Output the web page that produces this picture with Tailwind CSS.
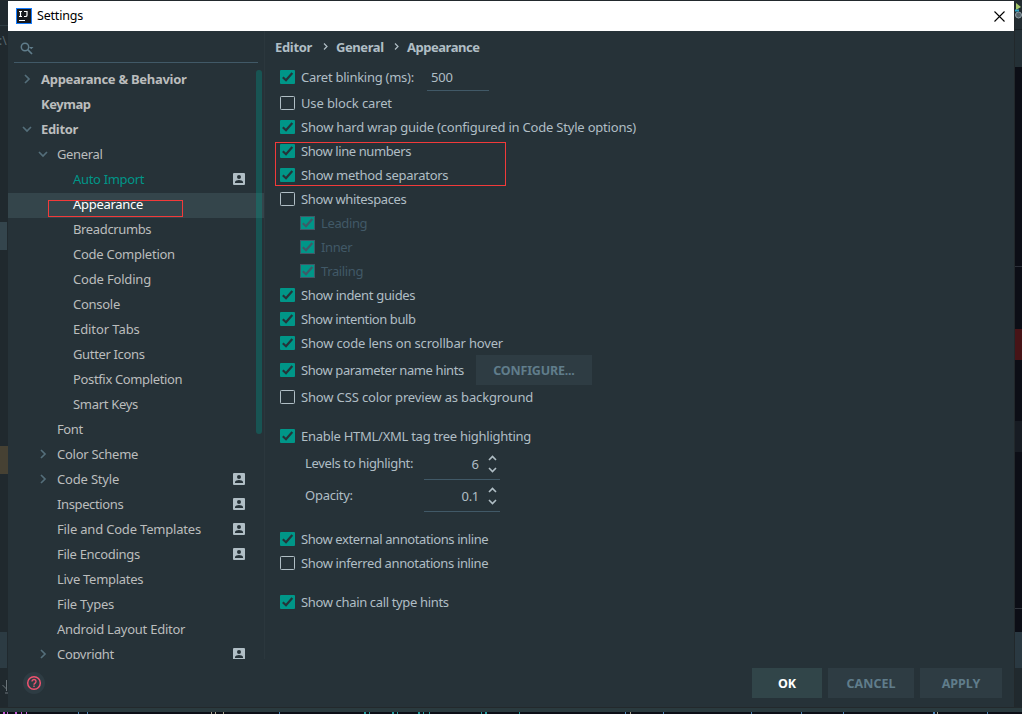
<!DOCTYPE html>
<html lang="en">
<head>
<meta charset="utf-8">
<title>Settings</title>
<script src="https://cdn.jsdelivr.net/npm/@tailwindcss/browser@4"></script>
</head>
<body class="w-[1022px] h-[714px] overflow-hidden flex flex-col bg-[#20292e] font-['Noto_Sans',sans-serif] text-[13px] leading-[18px] text-[#b0bec5] whitespace-nowrap">
<svg class="hidden">
  <symbol id="on" viewBox="0 0 15 14"><rect width="15" height="14" rx="1" fill="#009688"/><path d="M2.8 7.2 6 10.2 12.3 3" fill="none" stroke="#263238" stroke-width="2.200"/></symbol>
  <symbol id="dis" viewBox="0 0 15 14"><rect x=".5" y=".5" width="14" height="13" fill="#009688" stroke="#415967"/><path d="M2.8 7.2 6 10.2 12.3 3" fill="none" stroke="#415967" stroke-width="2.200"/></symbol>
  <symbol id="off" viewBox="0 0 15 14"><rect x=".5" y=".5" width="14" height="13" rx=".8" fill="none" stroke="#b0bec5"/></symbol>
  <symbol id="right" viewBox="0 0 10 10"><path d="M3 1l4 4-4 4" fill="none" stroke="#546e7a" stroke-width="1.700"/></symbol>
  <symbol id="down" viewBox="0 0 10 10"><path d="M1 3l4 4 4-4" fill="none" stroke="#546e7a" stroke-width="1.700"/></symbol>
  <symbol id="person" viewBox="0 0 12 12"><rect width="12" height="12" rx="1" fill="#b0bec5"/><circle cx="6" cy="4" r="2" fill="#263238"/><path d="M2 10V9c0-1.3 2.3-2 4-2s4 .7 4 2v1z" fill="#263238"/></symbol>
  <symbol id="spin" viewBox="0 0 9 18"><path d="M1 5l3.500-3.500L8 5M1 13l3.500 3.500L8 13" fill="none" stroke="#b0bec5" stroke-width="1.600"/></symbol>
</svg>
<div class="h-px shrink-0 bg-[#22292d]"></div>
<div class="flex h-[706px] shrink-0">
  <div class="w-2 flex flex-col overflow-hidden bg-[#20292e]">
    <div class="h-6"></div><div class="h-px bg-[#2f3c42]"></div>
    <div class="h-[30px] text-[12px] leading-[30px] text-[#596870] -ml-px">:\</div>
    <div class="h-[166px]"></div><div class="h-7 w-[7px] bg-[#34454d]"></div>
    <div class="h-[196px]"></div><div class="h-7 bg-[#464133]"></div>
    <div class="h-[158px]"></div><div class="h-9 w-[7px] bg-[#2c3b43]"></div>
    <div class="h-3"></div>
    <svg class="w-2 h-[14px] shrink-0" viewBox="0 0 8 14"><path d="M6.500 0v11M2.500 5l4 4M5 13h3" fill="none" stroke="#6b757a"/></svg>
  </div>
  <div class="w-[1006px] flex flex-col bg-[#263238]">
    <header class="h-[30px] shrink-0 bg-white text-black flex items-center pl-2 pr-[9px]">
      <svg class="size-4" viewBox="0 0 16 16"><rect width="16" height="16" fill="#167dff"/><rect x="1" y="1" width="14" height="14" fill="#16181d"/><path d="M3 3.500h3M4.500 3.500v5M3 8.500h3M8 3.500h3v3.700q0 1.300-1.500 1.300H8" fill="none" stroke="#fff" stroke-width="1.200"/><path d="M3 12.500h6" stroke="#fff"/></svg>
      <span class="ml-[5px] text-[12.500px] tracking-[-0.2px]">Settings</span>
      <svg class="ml-auto size-[11px]" viewBox="0 0 11 11"><path d="M.5.5l10 10M10.500.5l-10 10" stroke="#000" stroke-width="1.100"/></svg>
    </header>
    <div class="flex h-[628px] shrink-0">
      <aside class="w-[257px] shrink-0 h-full flex flex-col border-r border-[#2b373d] text-[#bbbdbd] relative">
        <div class="h-[32px] shrink-0 ml-[6px] mr-[6px] border-b border-[#415967] flex items-center pl-[6px] pt-1">
          <svg class="w-[15px] h-[13px]" viewBox="0 0 15 13"><circle cx="5" cy="5" r="3.700" fill="none" stroke="#607d8b" stroke-width="1.500"/><path d="M7.700 7.700l4.300 4.300" stroke="#607d8b" stroke-width="1.700"/><path d="M9 5h4.500l-2.250 2.250z" fill="#607d8b"/></svg>
        </div>
        <nav class="mt-[5px] flex-1 overflow-hidden">
          <div class="h-[25px] flex items-center pb-1 pl-[14px] font-bold tracking-[-0.29px]"><svg class="size-[10px] mr-[9px]"><use href="#right"/></svg>Appearance &amp; Behavior</div>
          <div class="h-[25px] flex items-center pb-1 pl-[33px] font-bold tracking-[-0.45px]">Keymap</div>
          <div class="h-[25px] flex items-center pb-1 pl-[14px] font-bold tracking-[-0.33px]"><svg class="size-[10px] mr-[9px]"><use href="#down"/></svg>Editor</div>
          <div class="h-[25px] flex items-center pb-1 pl-[30px] tracking-[-0.35px]"><svg class="size-[10px] mr-[9px]"><use href="#down"/></svg>General</div>
          <div class="h-[25px] flex items-center pb-1 pl-[65px] pr-[19px] justify-between text-[#009688] tracking-[-0.32px]">Auto Import<svg class="size-3"><use href="#person"/></svg></div>
          <div class="h-[25px] flex items-center pb-[3px] pl-[65px] bg-[#34454b] text-white tracking-[-0.3px]">Appearance</div>
          <div class="h-[25px] flex items-center pb-1 pl-[65px] tracking-[-0.36px]">Breadcrumbs</div>
          <div class="h-[25px] flex items-center pb-1 pl-[65px] tracking-[-0.25px]">Code Completion</div>
          <div class="h-[25px] flex items-center pb-1 pl-[65px] tracking-[-0.18px]">Code Folding</div>
          <div class="h-[25px] flex items-center pb-1 pl-[65px] tracking-[-0.28px]">Console</div>
          <div class="h-[25px] flex items-center pb-1 pl-[65px] tracking-[-0.08px]">Editor Tabs</div>
          <div class="h-[25px] flex items-center pb-1 pl-[65px] tracking-[-0.35px]">Gutter Icons</div>
          <div class="h-[25px] flex items-center pb-1 pl-[65px] tracking-[-0.35px]">Postfix Completion</div>
          <div class="h-[25px] flex items-center pb-1 pl-[65px] tracking-[-0.3px]">Smart Keys</div>
          <div class="h-[25px] flex items-center pb-1 pl-[49px] tracking-[-0.4px]">Font</div>
          <div class="h-[25px] flex items-center pb-1 pl-[30px] tracking-[-0.26px]"><svg class="size-[10px] mr-[9px]"><use href="#right"/></svg>Color Scheme</div>
          <div class="h-[25px] flex items-center pb-1 pl-[30px] pr-[19px] tracking-[-0.18px]"><svg class="size-[10px] mr-[9px]"><use href="#right"/></svg>Code Style<svg class="size-3 ml-auto"><use href="#person"/></svg></div>
          <div class="h-[25px] flex items-center pb-1 pl-[49px] pr-[19px] justify-between tracking-[-0.38px]">Inspections<svg class="size-3"><use href="#person"/></svg></div>
          <div class="h-[25px] flex items-center pb-1 pl-[49px] pr-[19px] justify-between tracking-[-0.19px]">File and Code Templates<svg class="size-3"><use href="#person"/></svg></div>
          <div class="h-[25px] flex items-center pb-1 pl-[49px] pr-[19px] justify-between tracking-[-0.3px]">File Encodings<svg class="size-3"><use href="#person"/></svg></div>
          <div class="h-[25px] flex items-center pb-1 pl-[49px] tracking-[-0.28px]">Live Templates</div>
          <div class="h-[25px] flex items-center pb-1 pl-[49px] tracking-[-0.22px]">File Types</div>
          <div class="h-[25px] flex items-center pb-1 pl-[49px] tracking-[-0.24px]">Android Layout Editor</div>
          <div class="h-[25px] flex items-center pb-1 pl-[30px] pr-[19px] tracking-[-0.33px]"><svg class="size-[10px] mr-[9px]"><use href="#right"/></svg>Copyright<svg class="size-3 ml-auto"><use href="#person"/></svg></div>
        </nav>
        <div class="absolute left-[248px] top-[39px] w-[6px] h-[364px] rounded-full bg-[#009688]/35"></div>
        <div class="absolute left-[40px] top-[169px] w-[135px] h-[17px] border border-[#f23a3a]"></div>
      </aside>
      <main class="flex-1 pl-[15px] relative">
        <div class="h-[33px] -ml-[5px] pb-[2px] flex items-center font-bold"><span class="w-[37px] tracking-[-0.33px]">Editor</span><svg class="w-[5px] h-[7px] ml-[11px] mr-2" viewBox="0 0 5 7"><path d="M1 .5l3 3-3 3" fill="none" stroke="#b0bec5" stroke-width="1.200"/></svg><span class="w-[47px] tracking-[-0.42px]">General</span><svg class="w-[5px] h-[7px] ml-[11px] mr-2" viewBox="0 0 5 7"><path d="M1 .5l3 3-3 3" fill="none" stroke="#b0bec5" stroke-width="1.200"/></svg><span class="tracking-[-0.48px]">Appearance</span></div>
        <div class="h-[27px] flex items-start gap-[6px]"><svg class="w-[15px] h-[14px] mt-[6px]"><use href="#on"/></svg><span class="w-[120px] mt-1 tracking-[-0.26px]">Caret blinking (ms):</span><span class="w-[62px] h-[27px] leading-[27px] pl-1 border-b border-[#415967] tracking-[-0.2px]">500</span></div>
        <div class="h-6 flex items-center gap-[6px] tracking-[-0.13px]"><svg class="w-[15px] h-[14px]"><use href="#off"/></svg><span>Use block caret</span></div>
        <div class="h-6 flex items-center gap-[6px] tracking-[-0.2px]"><svg class="w-[15px] h-[14px]"><use href="#on"/></svg><span>Show hard wrap guide (configured in Code Style options)</span></div>
        <div class="h-6 flex items-center gap-[6px] tracking-[-0.41px]"><svg class="w-[15px] h-[14px]"><use href="#on"/></svg><span>Show line numbers</span></div>
        <div class="h-6 flex items-center gap-[6px] tracking-[-0.27px]"><svg class="w-[15px] h-[14px]"><use href="#on"/></svg><span>Show method separators</span></div>
        <div class="h-6 flex items-center gap-[6px] tracking-[-0.37px]"><svg class="w-[15px] h-[14px]"><use href="#off"/></svg><span>Show whitespaces</span></div>
        <div class="pl-5 text-[#415967] tracking-[-0.38px]">
          <div class="h-6 flex items-center gap-[6px]"><svg class="w-[15px] h-[14px]"><use href="#dis"/></svg><span>Leading</span></div>
          <div class="h-6 flex items-center gap-[6px]"><svg class="w-[15px] h-[14px]"><use href="#dis"/></svg><span>Inner</span></div>
          <div class="h-6 flex items-center gap-[6px]"><svg class="w-[15px] h-[14px]"><use href="#dis"/></svg><span>Trailing</span></div>
        </div>
        <div class="h-6 flex items-center gap-[6px] tracking-[-0.33px]"><svg class="w-[15px] h-[14px]"><use href="#on"/></svg><span>Show indent guides</span></div>
        <div class="h-6 flex items-center gap-[6px] tracking-[-0.42px]"><svg class="w-[15px] h-[14px]"><use href="#on"/></svg><span>Show intention bulb</span></div>
        <div class="h-6 flex items-center gap-[6px] tracking-[-0.18px]"><svg class="w-[15px] h-[14px]"><use href="#on"/></svg><span>Show code lens on scrollbar hover</span></div>
        <div class="h-[30px] flex items-center gap-[6px]"><svg class="w-[15px] h-[14px]"><use href="#on"/></svg><span class="w-[169px] tracking-[-0.4px]">Show parameter name hints</span><button class="w-[116px] h-[30px] pt-px bg-[#2e3c43] text-[#607d8b] font-bold text-[12.500px] tracking-[-0.2px]">CONFIGURE...</button></div>
        <div class="h-6 flex items-center gap-[6px] tracking-[-0.15px]"><svg class="w-[15px] h-[14px]"><use href="#off"/></svg><span>Show CSS color preview as background</span></div>
        <div class="mt-[15px] h-6 flex items-center gap-[6px] tracking-[-0.27px]"><svg class="w-[15px] h-[14px]"><use href="#on"/></svg><span>Enable HTML/XML tag tree highlighting</span></div>
        <div class="h-8 flex items-center pl-[25px]"><span class="w-[119px] pb-[2px] tracking-[-0.35px]">Levels to highlight:</span><div class="w-[76px] h-8 flex items-center justify-end gap-[9px] pr-[3px] border-b border-[#415967]"><span>6</span><svg class="w-[9px] h-[18px]"><use href="#spin"/></svg></div></div>
        <div class="h-8 flex items-center pl-[25px]"><span class="w-[119px] pb-[2px] tracking-[-0.25px]">Opacity:</span><div class="w-[76px] h-8 flex items-center justify-end gap-[9px] pr-[3px] border-b border-[#415967]"><span class="tracking-[-0.3px]">0.1</span><svg class="w-[9px] h-[18px]"><use href="#spin"/></svg></div></div>
        <div class="mt-[15px] h-6 flex items-center gap-[6px] tracking-[-0.4px]"><svg class="w-[15px] h-[14px]"><use href="#on"/></svg><span>Show external annotations inline</span></div>
        <div class="h-6 flex items-center gap-[6px] tracking-[-0.37px]"><svg class="w-[15px] h-[14px]"><use href="#off"/></svg><span>Show inferred annotations inline</span></div>
        <div class="mt-[15px] h-6 flex items-center gap-[6px] tracking-[-0.35px]"><svg class="w-[15px] h-[14px]"><use href="#on"/></svg><span>Show chain call type hints</span></div>
        <div class="absolute left-[10px] top-[111px] w-[231px] h-[44px] border border-[#f23a3a]"></div>
      </main>
    </div>
    <footer class="h-12 flex items-center pl-[15px] pr-3 gap-[6px] font-bold text-[12.500px] text-[#607d8b]">
      <svg class="size-[22px] mr-auto" viewBox="0 0 22 22"><circle cx="11" cy="11" r="11" fill="#2e3c43"/><circle cx="11" cy="11" r="6.300" fill="none" stroke="#ef5370" stroke-width="1.500"/><path d="M9 9.500a2 2 0 1 1 3.300 1.500c-.8.600-1.300.9-1.300 1.700M11 13.500v1.500" fill="none" stroke="#ef5370" stroke-width="1.400"/></svg>
      <button class="w-[70px] h-[30px] pt-[2px] bg-[#314549] text-white">OK</button>
      <button class="w-[86px] h-[30px] pt-[2px] bg-[#2e3c43]">CANCEL</button>
      <button class="w-[82px] h-[30px] pt-[2px] bg-[#2e3c43]">APPLY</button>
    </footer>
  </div>
  <div class="w-2 flex flex-col bg-[#0c0e16] border-l border-[#22282b] overflow-hidden">
    <div class="h-[28px] bg-[#222c31]"><svg class="w-[7px] h-5" viewBox="0 0 7 20"><path d="M1 2l5 4-5 3z" fill="#a5c76b"/><circle cx="3.500" cy="14" r="3" fill="#56646b" stroke="#90a0a8"/><path d="M0 9.500h4" stroke="#2fa6c9" stroke-width="2"/></svg></div>
    <div class="h-px bg-[#1a2226]"></div><div class="h-[37px] bg-[#243036]"></div>
    <div class="h-[199px]"></div><div class="h-px bg-[#2b2f38]"></div>
    <div class="h-[62px]"></div><div class="h-[31px] bg-[#471417]"></div>
    <div class="h-[61px]"></div><div class="h-[31px] bg-[#171c23]"></div>
    <div class="h-[156px]"></div><div class="h-px bg-[#30343c]"></div>
    <div class="h-[23px]"></div><div class="h-9 bg-[#2a3942]"></div><div class="h-[39px] bg-[#20292e]"></div>
  </div>
</div>
<div class="h-[5px] shrink-0 bg-[#2a3a3e] border-t border-[#23292c]"></div>
<svg class="w-[1022px] h-[2px] shrink-0" viewBox="0 0 1022 2"><rect width="1022" height="2" fill="#0c0e16"/><g fill="none" stroke-width="2"><path d="M3 1h2M7 1h1M15 1h2M21 1h1M26 1h1" stroke="#c45bd6"/><path d="M78 1h1M87 1h1M279 1h1M625 1h1M663 1h1M751 1h1M801 1h1M843 1h1M933 1h2M987 1h1" stroke="#4c84b8"/><path d="M211 1h1M215 1h1M223 1h1M630 1h1M937 1h1" stroke="#aaa38e"/><path d="M364 1h2M369 1h1M392 1h2M397 1h1M418 1h2M423 1h1M429 1h1M481 1h1M485 1h2M519 1h1" stroke="#249a9e"/></g></svg>
</body>
</html>
